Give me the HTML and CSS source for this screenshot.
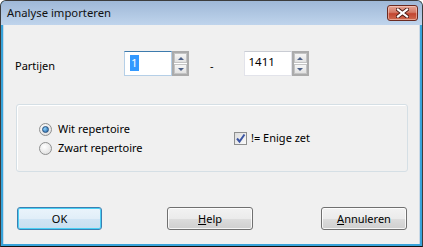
FILE: index.html
```html
<!DOCTYPE html>
<html lang="nl">
<head>
    <meta charset="UTF-8">
    <title>Analyse importeren</title>
    <link rel="stylesheet" href="styles.css">
</head>
<body>

    <div class="window">
        <div class="titlebar">
            <span class="title">Analyse importeren</span>
            <button class="close" type="button" aria-label="Sluiten">
                <svg width="13" height="10" viewBox="0 0 13 10">
                    <path d="M2 1.5 L11 8.5 M11 1.5 L2 8.5" stroke="#4a1a14" stroke-width="4" stroke-linecap="square"/>
                    <path d="M2 1.5 L11 8.5 M11 1.5 L2 8.5" stroke="#fff" stroke-width="2.2" stroke-linecap="square"/>
                </svg>
            </button>
        </div>

        <div class="client">
            <div class="range-row">
                <span class="label">Partijen</span>

                <div class="spin">
                    <div class="field focused"><span class="selected">1</span></div>
                    <div class="spin-btns">
                        <span class="spin-btn"><i class="arrow-up"></i></span>
                        <span class="spin-btn"><i class="arrow-down"></i></span>
                    </div>
                </div>

                <span class="dash">-</span>

                <div class="spin">
                    <div class="field">1411</div>
                    <div class="spin-btns">
                        <span class="spin-btn"><i class="arrow-up"></i></span>
                        <span class="spin-btn"><i class="arrow-down"></i></span>
                    </div>
                </div>
            </div>

            <div class="group">
                <div class="radios">
                    <label class="option"><span class="radio checked"></span>Wit repertoire</label>
                    <label class="option"><span class="radio"></span>Zwart repertoire</label>
                </div>
                <label class="option">
                    <span class="checkbox">
                        <svg width="11" height="11" viewBox="0 0 11 11">
                            <path d="M2 5.5 L4.5 8.5 L9.5 1.5" fill="none" stroke="#3b55a3" stroke-width="2"/>
                        </svg>
                    </span>!= Enige zet
                </label>
            </div>

            <div class="buttons">
                <button class="btn btn-default" type="button">OK</button>
                <button class="btn btn-help" type="button"><u>H</u>elp</button>
                <button class="btn btn-cancel" type="button"><u>A</u>nnuleren</button>
            </div>
        </div>
    </div>

</body>
</html>
```

FILE: styles.css
```css
/* Dialog window */
body {
    margin: 0;
    padding: 0;
    font-family: 'Noto Sans', 'Liberation Sans', sans-serif;
    font-size: 11px;
    color: #000;
    background: #fff;
}

.window {
    width: 423px;
    height: 247px;
    box-sizing: border-box;
    border: 1px solid #3c3c3c;
    border-bottom-color: #111;
    border-radius: 6px 6px 0 0;
    background-color: #38a3da;
    display: flex;
    flex-direction: column;
    overflow: hidden;
}

/* Title bar */
.titlebar {
    height: 24px;
    display: flex;
    justify-content: space-between;
    align-items: flex-start;
    background: linear-gradient(#9fb8d7, #bfd4ec);
}

.title {
    padding: 5px 0 0 6px;
    font-size: 11.3px;
    line-height: 14px;
    color: #111;
}

.close {
    width: 31px;
    height: 16px;
    margin: 4px 4px 0 0;
    padding: 0;
    border: 1px solid #6b2a20;
    border-radius: 3px;
    background: linear-gradient(#e6a494 0%, #d47a66 45%, #c2452f 55%, #cf6b50 100%);
    box-shadow: inset 0 0 0 1px rgba(255, 220, 210, 0.5);
    display: flex;
    justify-content: center;
    align-items: center;
}

/* Client area */
.client {
    height: 219px;
    margin: 0 2px;
    padding: 26px 13px 0 12px;
    box-sizing: border-box;
    background-color: #f0f0f0;
    box-shadow: inset 1px 0 0 #c8d8e6, inset -1px 0 0 #c8d8e6;
}

.range-row {
    display: flex;
    align-items: flex-start;
    height: 25px;
}

.label {
    width: 109px;
    line-height: 14px;
    padding-top: 8px;
}

.dash {
    margin: 8px 30px 0 21px;
    line-height: 14px;
}

/* Spin controls */
.spin {
    display: flex;
    width: 65px;
    height: 25px;
}

.field {
    padding: 3px 0 0 4px;
    box-sizing: border-box;
    flex: none;
    width: 48px;
    height: 25px;
    border: 1px solid #e2e3ea;
    border-top-color: #c9ccd3;
    background-color: #fff;
    line-height: 14px;
    font-size: 11.5px;
}

.field.focused {
    border-color: #b5cfe7;
    border-top-color: #3d7bad;
    padding-left: 5px;
}

.selected {
    display: inline-block;
    padding: 1px 1px;
    background-color: #3399ff;
    color: #fff;
}

.spin-btns {
    width: 17px;
    height: 25px;
    box-sizing: border-box;
    border: 2px solid #ababab;
    display: flex;
    flex-direction: column;
    gap: 1px;
    background-color: #fff;
}

.spin-btn {
    flex: 1;
    border: 1px solid #c4c4c4;
    background: linear-gradient(#f6f6f6, #e2e2e2);
    display: flex;
    justify-content: center;
    align-items: center;
}

.arrow-up {
    border-left: 3px solid transparent;
    border-right: 3px solid transparent;
    border-bottom: 3px solid #4d6087;
}

.arrow-down {
    border-left: 3px solid transparent;
    border-right: 3px solid transparent;
    border-top: 3px solid #4d6087;
}

/* Group box */
.group {
    margin-top: 28px;
    margin-left: 1px;
    width: 392px;
    height: 68px;
    box-sizing: border-box;
    border: 1px solid #d5dfe5;
    border-radius: 3px;
    box-shadow: inset 1px 1px 0 #fff;
    display: flex;
    align-items: center;
}

.radios {
    width: 195px;
    margin-left: 22px;
    padding-top: 1px;
}

.option {
    display: flex;
    align-items: center;
    height: 19px;
    line-height: 14px;
}

.radio {
    width: 11px;
    height: 11px;
    margin-right: 6px;
    border: 1px solid #8e8f8f;
    border-radius: 50%;
    background: radial-gradient(circle at 40% 35%, #fff, #d9d9d9);
    display: flex;
    justify-content: center;
    align-items: center;
}

.radio.checked::after {
    content: '';
    width: 5px;
    height: 5px;
    border-radius: 50%;
    background: radial-gradient(circle at 35% 35%, #8fd4ff, #1a5b9c);
    border: 1px solid #27507d;
}

.checkbox {
    width: 11px;
    height: 11px;
    margin-right: 4px;
    border: 1px solid #8e8f8f;
    background: linear-gradient(135deg, #dcdcdc, #fafafa);
    display: flex;
    justify-content: center;
    align-items: center;
}

/* Buttons */
.buttons {
    display: flex;
    margin-top: 35px;
    margin-left: 2px;
}

.btn {
    height: 23px;
    padding: 0;
    border: 1px solid #707070;
    border-radius: 3px;
    background: linear-gradient(#f2f2f2 0%, #ebebeb 50%, #dddddd 50%, #cfcfcf 100%);
    box-shadow: inset 0 0 0 1px rgba(255, 255, 255, 0.8);
    font-family: 'Noto Sans', 'Liberation Sans', sans-serif;
    font-size: 11px;
    color: #000;
}

.btn-default {
    width: 85px;
    border-color: #3c7fb1;
    background: linear-gradient(#eaf4fb 0%, #e1eef8 50%, #d1e5f4 50%, #c8dff0 100%);
    box-shadow: inset 0 0 0 1px #4ad0f5;
}

.btn-help {
    width: 86px;
    margin-left: 65px;
}

.btn-cancel {
    width: 86px;
    margin-left: 68px;
}
```
